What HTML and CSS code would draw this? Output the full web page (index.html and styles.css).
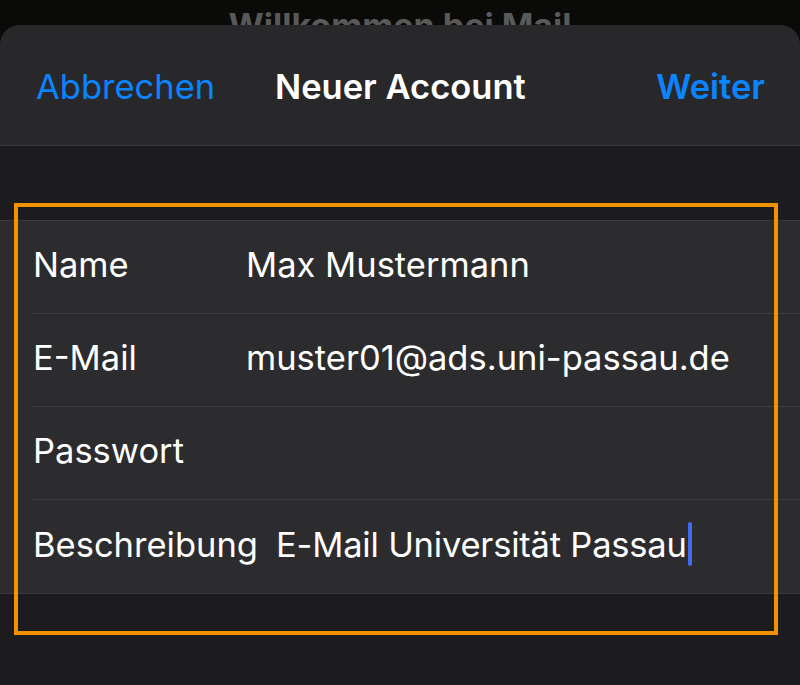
FILE: index.html
```html
<!DOCTYPE html>
<html lang="de">
<head>
<meta charset="utf-8">
<link rel="stylesheet" href="styles.css">
</head>
<body>
<div class="backdrop">
  <div class="backdrop-title">Willkommen bei Mail</div>
</div>
<div class="sheet">
  <header class="navbar">
    <span class="nav-btn cancel">Abbrechen</span>
    <span class="nav-title">Neuer Account</span>
    <span class="nav-btn next">Weiter</span>
  </header>
  <div class="spacer"></div>
  <div class="group">
    <div class="row"><span class="label">Name</span><span class="value">Max Mustermann</span></div>
    <div class="row"><span class="label">E-Mail</span><span class="value">muster01@ads.uni-passau.de</span></div>
    <div class="row"><span class="label">Passwort</span><span class="value"></span></div>
    <div class="row last"><span class="label">Beschreibung</span><span class="value desc">E-Mail Universität Passau<span class="cursor"></span></span></div>
  </div>
  <div class="highlight"></div>
</div>
</body>
</html>
```
FILE: styles.css
```css
* { box-sizing: border-box; }
html, body { margin: 0; padding: 0; }
body {
  width: 800px;
  height: 685px;
  background: #0a0a09;
  font-family: Inter, "Noto Sans", sans-serif;
  color: #fff;
  overflow: hidden;
  display: flex;
  flex-direction: column;
}
.backdrop {
  height: 25px;
  overflow: hidden;
  display: flex;
  justify-content: center;
  flex: none;
}
.backdrop-title {
  margin-top: 6px;
  font-size: 34px;
  font-weight: 700;
  color: #595959;
  line-height: 40px;
  white-space: nowrap;
}
.sheet {
  position: relative;
  flex: 1;
  background: #1c1c1e;
  border-radius: 20px 20px 0 0;
  overflow: hidden;
}
.navbar {
  height: 121px;
  background: #28282a;
  border-bottom: 1px solid #3a3a3c;
  display: flex;
  align-items: center;
  padding: 3px 35px 0 36px;
  font-size: 34.5px;
  position: relative;
}
.nav-btn { color: #0a84ff; }
.nav-btn.cancel { font-weight: 400; }
.nav-btn.next { font-weight: 600; margin-left: auto; }
.nav-title {
  position: absolute;
  left: 275px;
  font-weight: 600;
  color: #fff;
}
.spacer { height: 74px; }
.group {
  background: #2c2c2e;
  border-top: 1px solid #3a3a3c;
  border-bottom: 1px solid #3a3a3c;
}
.row {
  height: 93px;
  display: flex;
  align-items: center;
  margin-left: 32px;
  border-bottom: 1px solid #3c3c3e;
  font-size: 34.5px;
  padding-bottom: 5px;
}
.row.last { border-bottom: none; }
.label {
  min-width: 194px;
  margin-right: 20px;
  flex: none;
  padding-left: 1px;
  white-space: nowrap;
}
.value { display: flex; align-items: center; white-space: nowrap; }
.value.desc { margin-left: -2px; letter-spacing: -0.2px; }
.cursor {
  display: inline-block;
  width: 4px;
  height: 44px;
  background: #3d6cf0;
  border-radius: 2px;
  margin-left: 1px;
}
.highlight {
  position: absolute;
  left: 14px;
  top: 178px;
  width: 764px;
  height: 432px;
  border: 4px solid #f39200;
  pointer-events: none;
}
```
